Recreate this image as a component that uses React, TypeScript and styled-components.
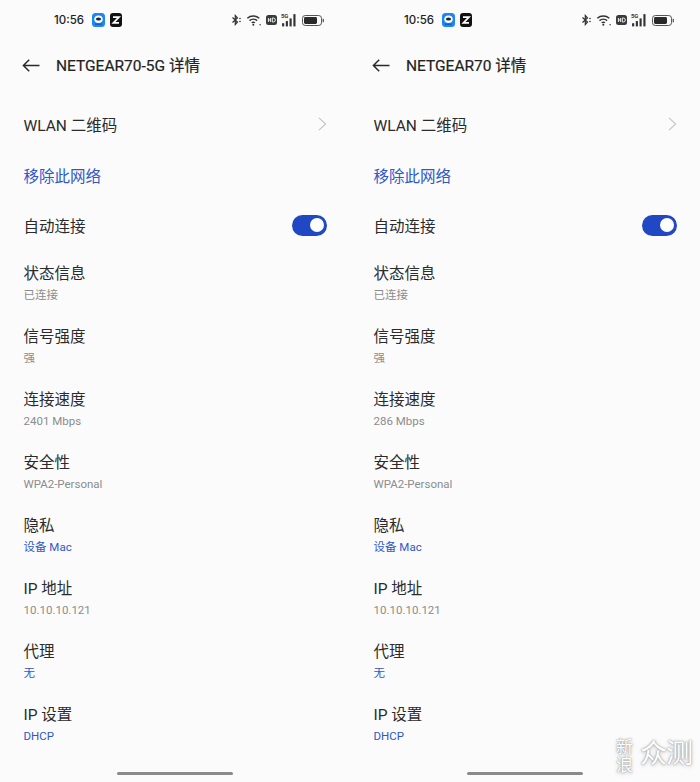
import React from "react";
import styled, { createGlobalStyle } from "styled-components";

const Global = createGlobalStyle`
  html, body { margin: 0; padding: 0; background: #fbfbfb; }
  body { font-family: Roboto, "Noto Sans CJK SC", sans-serif; }
`;
const Page = styled.div`
  position: relative;
  width: 700px;
  height: 782px;
  display: grid;
  grid-template-columns: 350px 350px;
  overflow: hidden;
  background: #fbfbfb;
`;
const Panel = styled.div`
  display: flex;
  flex-direction: column;
  height: 782px;
  padding: 0 23px 0 23.5px;
  box-sizing: border-box;
  position: relative;
`;
const StatusBar = styled.div`
  height: 40px;
  display: flex;
  align-items: center;
  padding: 0 3px 0 30.5px;
  font-family: Inter, Roboto, sans-serif;
  color: #222;
`;
const Time = styled.span`
  font-size: 11.5px;
  font-weight: 500;
  width: 38px;
`;
const AppIcons = styled.div`
  display: flex;
  gap: 5px;
`;
const StatusIcons = styled.div`
  margin-left: auto;
  display: flex;
  align-items: center;
  gap: 4px;
`;
const Header = styled.div`
  height: 50px;
  display: flex;
  align-items: center;
  margin-left: -1.5px;
`;
const Back = styled.svg`
  width: 18px;
  height: 14px;
  margin-right: 16px;
  transform: translateY(0.5px);
`;
const Title = styled.div`
  font-size: 15.5px;
  font-weight: 400;
  color: #222;
  -webkit-text-stroke: 0.2px #222;
  transform: translateY(-1px);
`;
const ActionRow = styled.div<{ $h: number }>`
  height: ${(p) => p.$h}px;
  display: flex;
  align-items: center;
  justify-content: space-between;
  font-size: 15.5px;
  color: ${(p) => p.color || "#2b2b2b"};
  flex: none;
`;
const Info = styled.div`
  height: 63px;
  flex: none;
  display: flex;
  flex-direction: column;
  justify-content: flex-start;
  padding-top: 7px;
  box-sizing: border-box;
`;
const Label = styled.div`
  font-size: 15.5px;
  line-height: 22px;
  color: #2b2b2b;
`;
const Sub = styled.div<{ $blue?: boolean }>`
  font-size: 11.5px;
  line-height: 15px;
  margin-top: 3px;
  color: ${(p) => (p.$blue ? "#2f57c8" : "#8c8c8c")};
`;
const Toggle = styled.div`
  width: 35px;
  height: 21px;
  border-radius: 11px;
  background: #2047c4;
  position: relative;
  &::after {
    content: "";
    position: absolute;
    right: 3px;
    top: 3.5px;
    width: 14px;
    height: 14px;
    border-radius: 50%;
    background: #fff;
  }
`;
const HomeBar = styled.div`
  position: absolute;
  left: 117px;
  bottom: 7px;
  width: 116px;
  height: 3px;
  border-radius: 2px;
  background: #8a8a8a;
`;
const Watermark = styled.div`
  position: absolute;
  right: 8px;
  bottom: 9px;
  display: flex;
  align-items: flex-start;
  gap: 7px;
  color: #fff;
  text-shadow: 0 0 1px #9a9a9a, 0 0 2px #a8a8a8, 0 1px 4px #bdbdbd;
  font-family: "Noto Sans CJK SC", sans-serif;
`;
const WmSmall = styled.div`
  font-size: 17px;
  line-height: 18px;
  width: 17px;
  font-weight: 400;
`;
const WmBig = styled.div`
  font-size: 27px;
  line-height: 30px;
  font-weight: 400;
  letter-spacing: -1px;
`;

const Bird = () => (
  <svg width="13" height="14" viewBox="0 0 13 14">
    <rect width="13" height="14" rx="3.5" fill="#1e86f0" />
    <ellipse cx="6.5" cy="6.2" rx="4.2" ry="3.7" fill="#fff" />
    <ellipse cx="6.5" cy="6" rx="2.6" ry="1.6" fill="#13233f" />
    <path d="M3 11.2h7" stroke="#0d5fc0" strokeWidth="1.3" />
  </svg>
);
const ZIcon = () => (
  <svg width="12" height="14" viewBox="0 0 12 14">
    <rect width="12" height="14" rx="3" fill="#111" />
    <path d="M3 4.2h6L3.4 9.8H9" fill="none" stroke="#fff" strokeWidth="1.7" />
  </svg>
);
const Bluetooth = () => (
  <svg width="12" height="12" viewBox="0 0 12 12" fill="none" stroke="#333" strokeWidth="1.2" style={{ marginRight: -1 }}>
    <path d="M1.5 3.5 6.5 8 4.3 10.5V1.5L6.5 4 1.5 8.5" />
    <circle cx="9" cy="4.5" r=".8" fill="#333" stroke="none" />
    <circle cx="9" cy="7.5" r=".8" fill="#333" stroke="none" />
  </svg>
);
const Wifi = () => (
  <svg width="16" height="12" viewBox="0 0 15 12" fill="none" stroke="#333" strokeWidth="1.45">
    <path d="M.8 4.2a9 9 0 0 1 12 0" />
    <path d="M3 6.6a5.8 5.8 0 0 1 7.6 0" />
    <path d="M5.2 8.8a2.6 2.6 0 0 1 3.2 0" />
    <circle cx="6.8" cy="10.8" r="1" fill="#333" stroke="none" />
    <circle cx="13.6" cy="10.8" r=".7" fill="#333" stroke="none" />
  </svg>
);
const HD = () => (
  <svg width="11" height="10" viewBox="0 0 11 10">
    <rect width="11" height="10" rx="2.5" fill="#3a3a3a" />
    <path d="M2.4 3v4M2.4 5h2.2M4.6 3v4M6.3 3v4h1a2 2 0 0 0 0-4z" fill="none" stroke="#fff" strokeWidth=".9" />
  </svg>
);
const Signal = () => (
  <svg width="16" height="14" viewBox="0 0 15 13" fill="#333">
    <text x="0" y="5" fontSize="5.5" fontWeight="700" fontFamily="Roboto">5G</text>
    <rect x="1" y="9.5" width="2" height="3" />
    <rect x="4.5" y="7.5" width="2" height="5" />
    <rect x="8" y="5" width="2" height="7.5" />
    <rect x="11.6" y="1" width="2" height="11.5" />
  </svg>
);
const Battery = () => (
  <svg width="22" height="11" viewBox="0 0 22 11" style={{ marginLeft: 1 }}>
    <rect x=".5" y=".5" width="19" height="10" rx="2.8" fill="none" stroke="#555" />
    <rect x="2" y="2" width="13" height="7" rx="1.4" fill="#2a2a2a" />
    <path d="M20.6 3.5a2 2 0 0 1 0 4z" fill="#666" />
  </svg>
);
const Chevron = () => (
  <svg width="9" height="14" viewBox="0 0 9 14" fill="none" stroke="#c4c4c4" strokeWidth="1.1">
    <path d="M1 .8 7.6 7 1 13.2" />
  </svg>
);

const Screen = ({ name, speed }: { name: string; speed: string }) => {
  const rows: [string, string, boolean?][] = [
    ["状态信息", "已连接"],
    ["信号强度", "强"],
    ["连接速度", speed],
    ["安全性", "WPA2-Personal"],
    ["隐私", "设备 Mac", true],
    ["IP 地址", "10.10.10.121"],
    ["代理", "无", true],
    ["IP 设置", "DHCP", true],
  ];
  return (
    <Panel>
      <StatusBar>
        <Time>10:56</Time>
        <AppIcons>
          <Bird />
          <ZIcon />
        </AppIcons>
        <StatusIcons>
          <Bluetooth />
          <Wifi />
          <HD />
          <Signal />
          <Battery />
        </StatusIcons>
      </StatusBar>
      <Header>
        <Back viewBox="0 0 18 14" fill="none" stroke="#2a2a2a" strokeWidth="1.5">
          <path d="M17.5 7H1.5M7.2 1.2 1.4 7l5.8 5.8" />
        </Back>
        <Title>{name} 详情</Title>
      </Header>
      <ActionRow $h={19} />
      <ActionRow $h={30}>
        WLAN 二维码
        <Chevron />
      </ActionRow>
      <ActionRow $h={21} />
      <ActionRow $h={30} color="#2f57c8">移除此网络</ActionRow>
      <ActionRow $h={20} />
      <ActionRow $h={30}>
        自动连接
        <Toggle />
      </ActionRow>
      <ActionRow $h={16} />
      {rows.map(([l, s, b]) => (
        <Info key={l}>
          <Label>{l}</Label>
          <Sub $blue={b}>{s}</Sub>
        </Info>
      ))}
      <HomeBar />
    </Panel>
  );
};

export default function App() {
  return (
    <Page>
      <Global />
      <Screen name="NETGEAR70-5G" speed="2401 Mbps" />
      <Screen name="NETGEAR70" speed="286 Mbps" />
      <Watermark>
        <WmSmall>新浪</WmSmall>
        <WmBig>众测</WmBig>
      </Watermark>
    </Page>
  );
}
